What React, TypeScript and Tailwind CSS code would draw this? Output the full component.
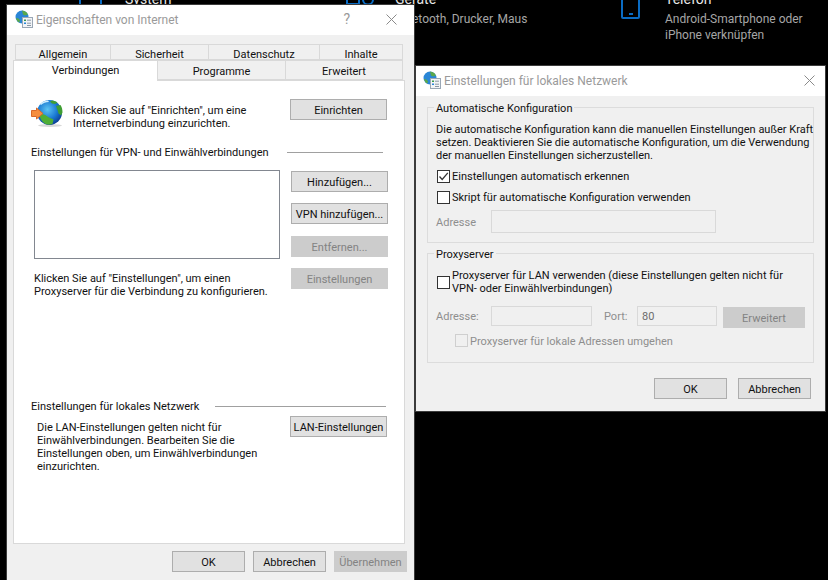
import type { ReactNode } from "react";

function Btn({ w, label, disabled, className = "" }: { w: string; label: string; disabled?: boolean; className?: string }) {
  return (
    <div
      className={`${w} flex h-[21px] shrink-0 items-center justify-center border pt-[2px] whitespace-nowrap ${disabled ? "border-[#cccccc] bg-[#cccccc] text-[#838383]" : "border-[#adadad] bg-[#e1e1e1] text-[#111111]"} ${className}`}
    >
      {label}
    </div>
  );
}

function GlobeIcon() {
  return (
    <svg width="42" height="27" viewBox="0 0 42 27" className="block">
      <defs>
        <radialGradient id="gl" cx="0.42" cy="0.38" r="0.65">
          <stop offset="0" stopColor="#5cc4f2" />
          <stop offset="0.6" stopColor="#1a78d2" />
          <stop offset="1" stopColor="#0b3c92" />
        </radialGradient>
      </defs>
      <ellipse cx="19" cy="25.500" rx="12" ry="1.500" fill="#d8d8d8" />
      <circle cx="18.500" cy="12.500" r="12.500" fill="url(#gl)" />
      <path d="M21 .4c2.500.3 4 1 5.500 2.100L24 4l-3-.5-2-2zM25 6l4.500-1c1.500 2.500 2 4.500 2 7.500l-1.500 3-2.500-2-1-3.500z" fill="#3f9e33" />
      <path d="M8 14.500c3-1.500 7 .5 10 3l4.500 2-1 4.500c-3 1-5 .8-7 0-3-1.500-5-5-6.500-9.500z" fill="#4fae36" />
      <path d="M9 4c2-2 5-3.300 8-3.400L18 2c-3 0-6 1-8 3z" fill="#cfeeff" />
      <path d="M.5 10.500h5V8l6.500 5.500-6.500 5.500v-2.500h-5z" fill="#f58e3f" stroke="#d8692a" />
    </svg>
  );
}

function TitleIcon() {
  return (
    <svg width="18" height="18" viewBox="0 0 18 18" className="block shrink-0">
      <circle cx="7" cy="7" r="6.500" fill="#2a86d6" />
      <path d="M7 .6c3 .2 5 2 6 4l-3 1-2-1zM1 8c2 0 4 1 4 3l-1 1.500C2.500 12 1.500 10 1 8z" fill="#5aa84a" />
      <rect x="7.500" y="7.500" width="10" height="10" fill="#f2f4f7" stroke="#9aa7b5" />
      <rect x="9" y="9.500" width="2" height="1.500" fill="#3a9a4a" />
      <rect x="9" y="12.500" width="2" height="1.500" fill="#2a86d6" />
      <path d="M12 10.200h4M12 13.200h4M12 15.500h4" stroke="#8a97a5" />
    </svg>
  );
}

function Close() {
  return (
    <svg width="11" height="11" viewBox="0 0 11 11" className="block">
      <path d="M.5.5l10 10M10.500.5l-10 10" stroke="#8a8a8a" fill="none" />
    </svg>
  );
}

function Check({ checked, dim }: { checked?: boolean; dim?: boolean }) {
  return (
    <div className={`size-[13px] shrink-0 border ${dim ? "border-[#cfcfcf] bg-[#f0f0f0]" : "border-[#333333] bg-white"}`}>
      {checked && (
        <svg width="11" height="11" viewBox="0 0 11 11" className="block">
          <path d="M1.500 5.500 4.200 8.500 9.800 1.800" fill="none" stroke="#333333" strokeWidth="1.300" />
        </svg>
      )}
    </div>
  );
}

function Tab({ w, label, first, pt }: { w: string; label: string; first?: boolean; pt: string }) {
  return (
    <div className={`${w} flex items-center justify-center border-y border-r border-[#d9d9d9] bg-[#f0f0f0] text-[#111111] ${pt} ${first ? "border-l" : ""}`}>
      {label}
    </div>
  );
}

function Tile({ icon, title, sub, gap, w }: { icon: ReactNode; title: string; sub?: ReactNode; gap: string; w: string }) {
  return (
    <div className={`flex shrink-0 items-start ${w} ${gap}`}>
      <div className="w-[22px] shrink-0">{icon}</div>
      <div className="whitespace-nowrap">
        <div className="text-[14px] leading-[18px] text-[#e8e8e8]">{title}</div>
        {sub && <div className="mt-[3px] text-[12px] leading-[16px] text-[#a6a6a6]">{sub}</div>}
      </div>
    </div>
  );
}

function Line({ className }: { className: string }) {
  return <div className={`h-px bg-[#a0a0a0] ${className}`} />;
}

export default function App() {
  return (
    <div className="relative h-[580px] w-[828px] overflow-hidden bg-black font-['Roboto','Open_Sans',sans-serif] text-[11px] leading-[13px]">
      {/* Desktop tiles behind the windows */}
      <div className="absolute inset-x-0 top-[-10px] flex pl-[79px]">
        <Tile
          w="w-[267px]"
          gap="gap-[24px]"
          title="System"
          icon={<div className="mt-[1px] h-[13px] w-[23px] border-x-2 border-[#0a6cc4]" />}
        />
        <Tile
          w="w-[275px]"
          gap="gap-[27px]"
          title="Geräte"
          sub="Bluetooth, Drucker, Maus"
          icon={
            <svg width="30" height="15" viewBox="0 0 30 15" className="block">
              <rect x="1" y="1" width="12" height="13" fill="none" stroke="#0a6cc4" strokeWidth="2" />
              <path d="M1 9h12" stroke="#0a6cc4" />
              <circle cx="22" cy="9.500" r="5" fill="none" stroke="#0a6cc4" strokeWidth="2" />
            </svg>
          }
        />
        <Tile
          w="w-[200px]"
          gap="gap-[22px]"
          title="Telefon"
          sub={<>Android-Smartphone oder<br />iPhone verknüpfen</>}
          icon={
            <div className="flex h-[29px] w-[19px] items-end justify-center rounded-[2px] border-2 border-[#0a6cc4] pb-[2px]">
              <div className="h-[2px] w-[4px] bg-[#0a6cc4]" />
            </div>
          }
        />
      </div>

      {/* Eigenschaften von Internet */}
      <div className="absolute left-[6px] top-[4px] flex h-[578px] w-[409px] flex-col border border-[#3c3c3c] bg-[#f0f0f0]">
        <div className="flex h-[30px] items-center bg-white pb-[2px] pl-[8px]">
          <TitleIcon />
          <span className="ml-[3px] pt-[2px] text-[12px] text-[#9a9a9a]">Eigenschaften von Internet</span>
          <span className="ml-auto text-[14px] text-[#9a9a9a]">?</span>
          <div className="ml-[36px] mr-[17px]"><Close /></div>
        </div>

        <div className="ml-[8px] mt-[9px] flex h-[16px] w-[388px]">
          <Tab first pt="pt-[4px]" w="w-[96px]" label="Allgemein" />
          <Tab pt="pt-[4px]" w="w-[98px]" label="Sicherheit" />
          <Tab pt="pt-[4px]" w="w-[111px]" label="Datenschutz" />
          <Tab pt="pt-[4px]" w="w-[83px]" label="Inhalte" />
        </div>
        <div className="ml-[6px] flex h-[20px]">
          <div className="relative z-10 flex h-[21px] w-[145px] items-center justify-center border-x border-t border-[#d9d9d9] bg-white pb-[2px] text-[#111111]">Verbindungen</div>
          <div className="flex w-[245px]">
            <Tab pt="pt-[2px]" w="w-[128px]" label="Programme" />
            <Tab pt="pt-[2px]" w="w-[117px]" label="Erweitert" />
          </div>
        </div>

        <div className="ml-[6px] flex h-[464px] w-[392px] flex-col border border-[#d9d9d9] bg-white pt-[18px] text-[#111111]">
          <div className="flex items-start pl-[17px] pr-[17px]">
            <div className="mt-[1px] w-[42px] shrink-0"><GlobeIcon /></div>
            <div className="mt-[5px]">
              Klicken Sie auf "Einrichten", um eine
              <br />
              Internetverbindung einzurichten.
            </div>
            <Btn w="w-[97px]" label="Einrichten" className="ml-auto" />
          </div>

          <div className="mt-[16px] flex items-center pl-[17px]">
            <span className="whitespace-nowrap">Einstellungen für VPN- und Einwählverbindungen</span>
            <Line className="ml-auto mr-[21px] w-[96px]" />
          </div>

          <div className="mt-[11px] flex pl-[20px]">
            <div className="w-[246px] shrink-0">
              <div className="h-[89px] border border-[#828790] bg-white" />
              <div className="mt-[13px] whitespace-nowrap">
                Klicken Sie auf "Einstellungen", um einen
                <br />
                Proxyserver für die Verbindung zu konfigurieren.
              </div>
            </div>
            <div className="ml-[11px] mt-[1px] flex h-[118px] w-[97px] flex-col justify-between">
              <Btn w="w-[97px]" label="Hinzufügen..." />
              <Btn w="w-[97px]" label="VPN hinzufügen..." />
              <Btn w="w-[97px]" label="Entfernen..." disabled />
              <Btn w="w-[97px]" label="Einstellungen" disabled />
            </div>
          </div>

          <div className="mt-[102px] flex items-center pl-[17px]">
            <span className="whitespace-nowrap">Einstellungen für lokales Netzwerk</span>
            <Line className="ml-auto mr-[18px] w-[171px]" />
          </div>

          <div className="mt-[3px] flex items-start pl-[23px] pr-[17px]">
            <div className="mt-[5px] whitespace-nowrap">
              Die LAN-Einstellungen gelten nicht für
              <br />
              Einwählverbindungen. Bearbeiten Sie die
              <br />
              Einstellungen oben, um Einwählverbindungen
              <br />
              einzurichten.
            </div>
            <Btn w="w-[97px]" label="LAN-Einstellungen" className="ml-auto" />
          </div>
        </div>

        <div className="mt-[7px] flex justify-end gap-[8px] pr-[7px]">
          <Btn w="w-[73px]" label="OK" />
          <Btn w="w-[73px]" label="Abbrechen" />
          <Btn w="w-[73px]" label="Übernehmen" disabled />
        </div>
      </div>

      {/* Einstellungen für lokales Netzwerk */}
      <div className="absolute left-[415px] top-[65px] flex h-[347px] w-[411px] flex-col border border-[#3c3c3c] bg-[#f0f0f0] text-[#111111]">
        <div className="flex h-[30px] shrink-0 items-center bg-white pb-[2px] pl-[7px]">
          <TitleIcon />
          <span className="ml-[3px] pt-[2px] text-[12px] text-[#9a9a9a]">Einstellungen für lokales Netzwerk</span>
          <div className="ml-auto mr-[10px]"><Close /></div>
        </div>

        <fieldset className="mx-[11px] mt-[5px] min-w-0 border border-[#dcdcdc] pb-[9px] pl-[8px]">
          <legend className="-ml-[2px] px-[2px]"><span className="relative top-px">Automatische Konfiguration</span></legend>
          <div className="mt-[9px] whitespace-nowrap">
            Die automatische Konfiguration kann die manuellen Einstellungen außer Kraft
            <br />
            setzen. Deaktivieren Sie die automatische Konfiguration, um die Verwendung
            <br />
            der manuellen Einstellungen sicherzustellen.
          </div>
          <div className="ml-[1px] mt-[8px] flex items-center gap-[2px]">
            <Check checked />
            <span>Einstellungen automatisch erkennen</span>
          </div>
          <div className="ml-[1px] mt-[8px] flex items-center gap-[2px]">
            <Check />
            <span>Skript für automatische Konfiguration verwenden</span>
          </div>
          <div className="mt-[6px] flex items-center">
            <span className="w-[55px] pt-[2px] text-[#8e8e8e]">Adresse</span>
            <div className="h-[23px] w-[225px] border border-[#d9d9d9]" />
          </div>
        </fieldset>

        <fieldset className="mx-[11px] mt-[4px] min-w-0 border border-[#dcdcdc] pb-[14px] pl-[8px]">
          <legend className="-ml-[2px] px-[2px]"><span className="relative top-px">Proxyserver</span></legend>
          <div className="ml-[1px] mt-[9px] flex items-center gap-[2px]">
            <Check />
            <span className="whitespace-nowrap">
              Proxyserver für LAN verwenden (diese Einstellungen gelten nicht für
              <br />
              VPN- oder Einwählverbindungen)
            </span>
          </div>
          <div className="mt-[11px] flex items-start">
            <span className="mt-[4px] w-[55px] text-[#8e8e8e]">Adresse:</span>
            <div className="h-[20px] w-[101px] border border-[#d9d9d9]" />
            <span className="ml-[12px] mt-[4px] w-[33px] text-[#8e8e8e]">Port:</span>
            <div className="flex h-[20px] w-[80px] items-center border border-[#d9d9d9] pl-[4px] text-[#6d6d6d]">80</div>
            <Btn w="w-[82px]" label="Erweitert" disabled className="ml-[6px] mt-[1px]" />
          </div>
          <div className="ml-[19px] mt-[5px] flex items-center gap-[2px]">
            <Check dim />
            <span className="pt-[2px] text-[#8e8e8e]">Proxyserver für lokale Adressen umgehen</span>
          </div>
        </fieldset>

        <div className="mt-[15px] flex justify-end gap-[11px] pr-[14px]">
          <Btn w="w-[73px]" label="OK" />
          <Btn w="w-[73px]" label="Abbrechen" />
        </div>
      </div>
    </div>
  );
}
